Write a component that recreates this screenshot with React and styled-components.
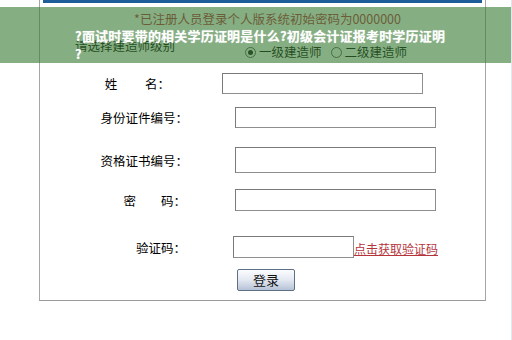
import React from "react"
import styled, { createGlobalStyle } from "styled-components"

const GlobalStyle = createGlobalStyle`
  html, body {
    margin: 0;
    padding: 0;
    background: #fff;
  }
  body {
    font-family: "Noto Sans CJK SC", "Noto Sans", sans-serif;
    color: #222;
  }
`

const Page = styled.div`
  position: relative;
  width: 511px;
  height: 340px;
  overflow: hidden;
  border-right: 1px solid #dfe8f0;
`

const Panel = styled.div`
  margin-left: 39px;
  width: 445px;
  border-left: 1px solid #a6a6a6;
  border-right: 1px solid #a6a6a6;
  border-bottom: 1px solid #9a9a9a;
  padding-bottom: 9px;
`

const TopBar = styled.div`
  height: 3px;
  margin: 0 3px;
  background: #1d5d98;
`

const Notice = styled.div`
  margin-top: 8px;
  height: 16px;
  line-height: 16px;
  font-size: 12.5px;
  color: #b82a3a;
  text-align: center;
  padding-left: 10px;
`

const LevelRow = styled.div`
  display: flex;
  align-items: flex-start;
  margin-top: 11px;
  height: 23px;
  padding-left: 35px;
  font-size: 12.5px;
  line-height: 16px;
  color: #000;
`

const LevelLabel = styled.span`
  width: 170px;
`

const Radios = styled.div`
  display: flex;
  align-items: center;
  margin-top: 6px;
  gap: 3px;
`

const Radio = styled.span`
  display: inline-flex;
  align-items: center;
  justify-content: center;
  box-sizing: border-box;
  width: 11px;
  height: 11px;
  border-radius: 50%;
  border: 1px solid #555;
  background: #fff;
  margin-left: ${({ $gap }) => $gap || 0}px;

  &::after {
    content: "";
    width: 5px;
    height: 5px;
    border-radius: 50%;
    background: ${({ $checked }) => ($checked ? "#111" : "transparent")};
  }
`

const Row = styled.div`
  display: flex;
  align-items: center;
  margin-top: ${({ $top }) => $top}px;
  height: ${({ $h }) => $h}px;
`

const Label = styled.label`
  width: ${({ $w }) => $w}px;
  flex: none;
  text-align: right;
  font-size: 12.5px;
  white-space: pre;
  color: #000;
`

const Input = styled.input`
  box-sizing: border-box;
  margin: 0 0 0 ${({ $left }) => $left}px;
  width: ${({ $w }) => $w || 201}px;
  height: 100%;
  border: 1px solid #8e8e8e;
  border-top-color: #7a7a7a;
  border-left-color: #7a7a7a;
  background: #fff;
  padding: 0 3px;
  font-size: 12px;
  outline: none;
`

const CodeLink = styled.a`
  align-self: flex-end;
  margin-bottom: 1px;
  font-size: 12px;
  color: #b4343c;
  text-decoration: underline;
  line-height: 16px;
`

const Button = styled.button`
  margin: 0 0 0 ${({ $left }) => $left}px;
  width: 58px;
  height: 100%;
  border: 1px solid #5f6f86;
  border-radius: 2px;
  background: linear-gradient(#fbfcfe, #e3e8f1 50%, #b6c2d6);
  font-family: "Noto Sans CJK SC", sans-serif;
  font-size: 13px;
  color: #111;
  padding: 0;
  line-height: 18px;
`

const Banner = styled.div`
  position: absolute;
  top: 7px;
  left: 0;
  right: 0;
  height: 56px;
  background: rgba(60, 125, 55, 0.62);
  box-sizing: border-box;
  padding: 20px 0 0 75px;
`

const Title = styled.h1`
  margin: 0;
  font-size: 13px;
  font-weight: 700;
  letter-spacing: 0.2px;
  line-height: 18px;
  color: #fff;
  white-space: nowrap;
  text-shadow: 0 0 1px rgba(255, 255, 255, 0.5);
`

export default function App() {
  return (
    <Page>
      <GlobalStyle />
      <Panel>
        <TopBar />
        <Notice>*已注册人员登录个人版系统初始密码为0000000</Notice>
        <LevelRow>
          <LevelLabel>请选择建造师级别</LevelLabel>
          <Radios>
            <Radio $checked />
            <span>一级建造师</span>
            <Radio $gap={6} />
            <span>二级建造师</span>
          </Radios>
        </LevelRow>

        <Row $top={12} $h={21}>
          <Label $w={130}>{"姓　　 名："}</Label>
          <Input $left={52} />
        </Row>
        <Row $top={13} $h={21}>
          <Label $w={148}>身份证件编号：</Label>
          <Input $left={47} />
        </Row>
        <Row $top={19} $h={26}>
          <Label $w={148}>资格证书编号：</Label>
          <Input $left={47} />
        </Row>
        <Row $top={16} $h={22}>
          <Label $w={146}>{"密　　码："}</Label>
          <Input $left={49} type="password" />
        </Row>
        <Row $top={25} $h={22}>
          <Label $w={146}>验证码：</Label>
          <Input $left={47} $w={121} />
          <CodeLink href="#">点击获取验证码</CodeLink>
        </Row>
        <Row $top={11} $h={22}>
          <Button $left={197}>登录</Button>
        </Row>
      </Panel>

      <Banner>
        <Title>
          ?面试时要带的相关学历证明是什么?初级会计证报考时学历证明
          <br />?
        </Title>
      </Banner>
    </Page>
  )
}
